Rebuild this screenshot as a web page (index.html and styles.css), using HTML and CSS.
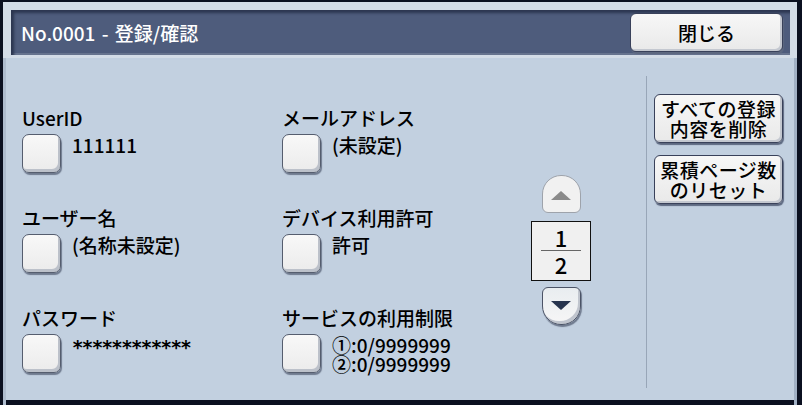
FILE: index.html
```html
<!DOCTYPE html>
<html>
<head>
  <meta charset="UTF-8">
  <title>No.0001 - 登録/確認</title>
  <link rel="stylesheet" href="styles.css">
</head>

<body>
  <div class="screen">
    <div class="top">
      <div class="header">
        <span class="title">No.0001 - 登録/確認</span>
        <button class="btn close-btn">閉じる</button>
      </div>
    </div>

    <div class="main">
      <div class="fields">
        <div class="field">
          <div class="label">UserID</div>
          <div class="row"><span class="check"></span><span class="value">111111</span></div>
        </div>
        <div class="field">
          <div class="label">メールアドレス</div>
          <div class="row"><span class="check"></span><span class="value">(未設定)</span></div>
        </div>
        <div class="field">
          <div class="label">ユーザー名</div>
          <div class="row"><span class="check"></span><span class="value">(名称未設定)</span></div>
        </div>
        <div class="field">
          <div class="label">デバイス利用許可</div>
          <div class="row"><span class="check"></span><span class="value">許可</span></div>
        </div>
        <div class="field">
          <div class="label">パスワード</div>
          <div class="row"><span class="check"></span><span class="value stars">************</span></div>
        </div>
        <div class="field">
          <div class="label">サービスの利用制限</div>
          <div class="row">
            <span class="check"></span>
            <div class="value">
              <div class="line">①:0/9999999</div>
              <div class="line">②:0/9999999</div>
            </div>
          </div>
        </div>
      </div>

      <!-- page up / page count / page down -->
      <div class="pager">
        <div class="page-btn up">
          <svg width="20" height="9" viewBox="0 0 20 9"><polygon points="0,9 10,0 20,9" fill="#8a8a8a"/></svg>
        </div>
        <div class="page-box">
          <span class="page-num">1</span>
          <span class="page-line"></span>
          <span class="page-num">2</span>
        </div>
        <div class="page-btn down">
          <svg width="20" height="9" viewBox="0 0 20 9"><polygon points="0,0 20,0 10,9" fill="#27344e"/></svg>
        </div>
      </div>

      <div class="divider"></div>

      <div class="actions">
        <button class="btn action-btn"><span class="line">すべての登録</span><span class="line">内容を削除</span></button>
        <button class="btn action-btn"><span class="line">累積ページ数</span><span class="line">のリセット</span></button>
      </div>
    </div>
  </div>
</body>
</html>
```

FILE: styles.css
```css
/* whole panel */
body {
  margin: 0;
  background: #0b1020;
  font-family: "Noto Sans CJK JP", "Noto Sans", sans-serif;
  font-weight: 500;
  color: #000;
}
.screen {
  width: 802px;
  height: 405px;
  box-sizing: border-box;
  border: solid #0b1020;
  border-width: 2px 5px 5px 3px;
  background: #c2d0e0;
  display: flex;
  flex-direction: column;
}

/* title bar */
.top {
  background: #d3dce7;
  padding: 8px 7px 3px 8px;
}
.header {
  height: 45px;
  background: #4e5c7c;
  box-shadow: inset 3px 3px 3px #2c3650, inset 0 -2px 0 #66738e;
  display: flex;
  align-items: center;
  justify-content: space-between;
  padding: 0 7px 0 10px;
}
.title {
  color: #fff;
  font-size: 19px;
  line-height: 22px;
  word-spacing: 2px;
}

/* raised buttons */
.btn {
  font-family: inherit;
  font-weight: inherit;
  color: #000;
  border: 1px solid #39415a;
  border-radius: 6px;
  background: linear-gradient(#f7f7f7, #e9e9e9);
  box-shadow: inset -2px -2px 0 #c4c8d0, 1px 2px 1px #5d6880;
  padding: 0;
  cursor: pointer;
}
.close-btn {
  width: 153px;
  height: 39px;
  font-size: 19px;
}

/* content area */
.main {
  flex: 1;
  display: flex;
  align-items: flex-start;
  border-left: 3px solid #aebcce;
  border-right: 3px solid #a2b1c5;
  border-bottom: 7px solid #8e9cb2;
}
.fields {
  display: grid;
  grid-template-columns: 260px 249px;
  grid-auto-rows: 100px;
  margin: 49px 0 0 16px;
}
.label {
  font-size: 19px;
  line-height: 22px;
  white-space: nowrap;
}
.row {
  display: flex;
  align-items: flex-start;
  margin-top: 5px;
}
.check {
  flex: none;
  width: 37px;
  height: 37px;
  border: 1px solid #555d6e;
  border-radius: 7px;
  background: linear-gradient(#f8f8f8, #ebebeb);
  box-shadow: inset -2px -3px 0 #bcc1ca, 1px 2px 1px #6f7a8e;
}
.value {
  margin: 1px 0 0 11px;
  font-size: 19px;
  line-height: 19px;
  white-space: nowrap;
}
.value .line {
  height: 19px;
}
.stars {
  font-family: "DejaVu Sans Mono", monospace;
  font-weight: bold;
  letter-spacing: -1.6px;
  margin-top: 4px;
}

/* pager */
.pager {
  width: 60px;
  margin-top: 117px;
  display: flex;
  flex-direction: column;
  align-items: center;
}
.page-btn {
  width: 37px;
  display: flex;
  align-items: center;
  justify-content: center;
}
.page-btn.up {
  border: 1px solid #9ea3ab;
  border-radius: 19px 19px 6px 6px;
  background: #f1f1f1;
  padding-top: 2px;
  height: 34px;
}
.page-btn.down {
  border: 1px solid #4b5366;
  border-radius: 6px 6px 19px 19px;
  background: linear-gradient(#e9edf0, #f6f6f6);
  box-shadow: inset -2px -3px 0 #c0c5ce, 1px 2px 1px #6f7a8e;
  padding-bottom: 2px;
  height: 34px;
}
.page-box {
  width: 58px;
  height: 58px;
  margin: 8px 0 6px;
  border: 1px solid #111;
  background: #f0f0f0;
  display: flex;
  flex-direction: column;
  align-items: center;
}
.page-num {
  font-size: 22px;
  line-height: 26px;
  margin-top: 2px;
}
.page-line {
  width: 40px;
  height: 1px;
  background: #666;
}
.page-line + .page-num {
  margin-top: 0;
}

.divider {
  width: 1px;
  height: 312px;
  background: #98a6b8;
  margin: 18px 0 0 55px;
}

/* side buttons */
.actions {
  display: flex;
  flex-direction: column;
  gap: 12px;
  margin: 36px 0 0 7px;
}
.action-btn {
  width: 129px;
  height: 49px;
  font-size: 19px;
  white-space: nowrap;
  letter-spacing: 0.5px;
  display: flex;
  flex-direction: column;
  align-items: center;
  justify-content: center;
}
.action-btn .line {
  display: block;
  height: 20px;
  line-height: 20px;
}
```
